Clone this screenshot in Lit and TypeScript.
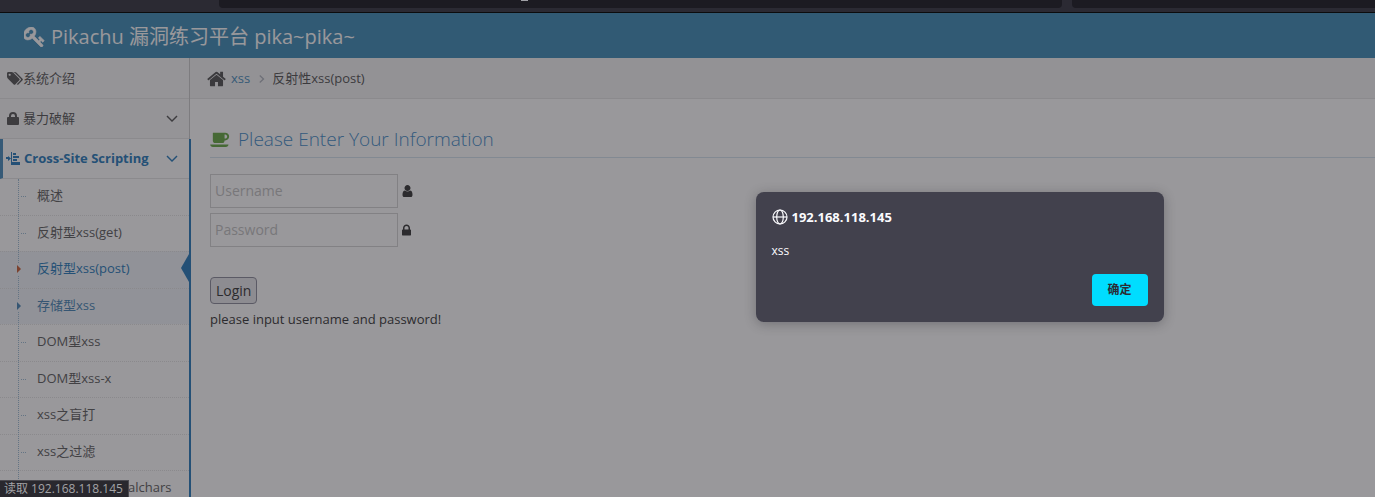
import { LitElement, html, css, svg } from "lit";
import { customElement, state } from "lit/decorators.js";

const glyphs = {
  key: ["100 120 1620 1600", "M832 512q0-80-56-136t-136-56-136 56-56 136q0 42 19 83-41-19-83-19-80 0-136 56t-56 136 56 136 136 56 136-56 56-136q0-42-19-83 41 19 83 19 80 0 136-56t56-136zm851 704q0 17-49 66t-66 49q-9 0-28.5-16t-36.5-33-38.5-40-24.5-26l-96 96 220 220q28 28 28 68 0 42-39 81t-81 39q-40 0-68-28l-671-671q-176 131-365 131-163 0-265.5-102.5t-102.5-265.5q0-160 95-313t248-248 313-95q163 0 265.5 102.5t102.5 265.5q0 189-131 365l355 355 96-96q-3-3-26-24.5t-40-38.5-33-36.5-16-28.5q0-17 49-66t66-49q13 0 23 10 6 6 46 44.5t82 79.5 86.5 86 73 78 28.5 41z"],
  home: ["64 192 1664 1408", "M1472 992v480q0 26-19 45t-45 19h-384v-384h-256v384h-384q-26 0-45-19t-19-45v-480q0-1 .5-3t.5-3l575-474 575 474q1 2 1 6zm223-69l-62 74q-8 9-21 11h-3q-13 0-21-7l-692-577-692 577q-12 8-24 7-13-2-21-11l-62-74q-8-10-7-23.5t11-21.5l719-599q32-26 76-26t76 26l244 204v-195q0-14 9-23t23-9h192q14 0 23 9t9 23v408l219 182q10 8 11 21.5t-7 23.5z"],
  coffee: ["0 320 1920 1472", "M1664 768q0-80-56-136t-136-56h-64v384h64q80 0 136-56t56-136zm-1664 768h1792q0 106-75 181t-181 75h-1280q-106 0-181-75t-75-181zm1856-768q0 159-112.5 271.5t-271.5 112.5h-64v32q0 92-66 158t-158 66h-704q-92 0-158-66t-66-158v-736q0-26 19-45t45-19h1152q159 0 271.5 112.5t112.5 271.5z"],
  tags: ["0 128 1920 1536", "M448 448q0-53-37.5-90.5t-90.5-37.5-90.5 37.5-37.5 90.5 37.5 90.5 90.5 37.5 90.5-37.5 37.5-90.5zm1067 576q0 53-37 90l-491 492q-39 37-91 37-53 0-90-37l-715-716q-38-37-64.5-101t-26.5-117v-416q0-52 38-90t90-38h416q53 0 117 26.5t102 64.5l715 714q37 39 37 91zm384 0q0 53-37 90l-491 492q-39 37-91 37-36 0-59-14t-53-45l470-470q37-37 37-90 0-52-37-91l-715-714q-38-38-102-64.5t-117-26.5h224q53 0 117 26.5t102 64.5l715 714q37 39 37 91z"],
  user: ["256 128 1280 1536", "M1536 1399q0 109-62.5 187t-150.5 78h-854q-88 0-150.5-78t-62.5-187q0-85 8.5-160.5t31.5-152 58.5-131 94-89 134.5-34.5q131 128 313 128t313-128q76 0 134.5 34.5t94 89 58.5 131 31.5 152 8.5 160.5zm-256-887q0 159-112.5 271.5t-271.5 112.5-271.5-112.5-112.5-271.5 112.5-271.5 271.5-112.5 271.5 112.5 112.5 271.5z"],
  lock: ["320 128 1152 1408", "M640 768h512v-192q0-106-75-181t-181-75-181 75-75 181v192zm832 96v576q0 40-28 68t-68 28h-960q-40 0-68-28t-28-68v-576q0-40 28-68t68-28h32v-192q0-184 132-316t316-132 316 132 132 316v192h32q40 0 68 28t28 68z"],
  padlock: ["0 0 12 13", "M2 5V4q0-4 4-4t4 4v1h1q1 0 1 1v6q0 1-1 1H1q-1 0-1-1V6q0-1 1-1zM4 5h4V4q0-2-2-2t-2 2z"],
  indent: ["0 0 14 13", "M5 0h1v13H5zM7 1h3v2H7zM7 4h6v2H7zM7 7h4v2H7zM6 10h8v3H6zM0 5h2V4l3 2.500L2 9V7H0z"],
  down: ["0 0 12 8", "M1.500.500 6 5 10.500.500 11.500 1.500 6 7 .500 1.500z"],
  right: ["0 0 6 8", "M1.200 0 5.500 4 1.200 8 .300 7 3.500 4 .300 1z"],
} as const;

const icon = (name: keyof typeof glyphs, cls: string) => html`
  <svg class="icon ${cls}" viewBox=${glyphs[name][0]} aria-hidden="true">
    ${svg`<path d=${glyphs[name][1]} fill="currentColor"></path>`}
  </svg>`;

const submenu = [
  { text: "概述", cls: "" },
  { text: "反射型xss(get)", cls: "" },
  { text: "反射型xss(post)", cls: "current" },
  { text: "存储型xss", cls: "hover" },
  { text: "DOM型xss", cls: "" },
  { text: "DOM型xss-x", cls: "" },
  { text: "xss之盲打", cls: "" },
  { text: "xss之过滤", cls: "" },
  { text: "xss之htmlspecialchars", cls: "" },
];

@customElement("app-root")
export class AppRoot extends LitElement {
  static styles = css`
    :host {
      display: flex;
      flex-direction: column;
      height: 100vh;
      overflow: hidden;
      font: 13px/1.5 "Open Sans", "Noto Sans CJK SC", sans-serif;
      color: #393939;
    }
    * { box-sizing: border-box; }
    a { color: inherit; text-decoration: none; }
    ul, ol { list-style: none; margin: 0; padding: 0; }
    .icon { display: block; flex: none; }

    .toolbar {
      flex: none;
      display: flex;
      gap: 10px;
      height: 13px;
      padding: 0 0 4px 219px;
      background: #2b2a33;
      border-bottom: 1px solid #0c0c0d;
    }
    .field { height: 8px; background: #1c1b22; border-radius: 0 0 4px 4px; }
    .address { flex: 843 1 0; }
    .search { flex: 303 1 0; border-bottom-right-radius: 0; }
    .caret { width: 7px; height: 1px; margin-left: 302px; background: #a0a0a6; }

    .viewport {
      position: relative;
      flex: 1;
      min-height: 0;
      display: flex;
      flex-direction: column;
      overflow: hidden;
      background: #fff;
    }
    .navbar {
      flex: none;
      height: 45px;
      padding: 2px 0 0 24px;
      display: flex;
      align-items: center;
      background: #438eb9;
      color: #fff;
    }
    .brand { display: flex; align-items: center; gap: 6px; font-size: 20px; line-height: 30px; }
    .key { width: 21px; height: 20px; stroke: currentColor; stroke-width: 50; }

    .body { flex: 1; min-height: 0; display: flex; isolation: isolate; }
    .sidebar {
      position: relative;
      z-index: 1;
      flex: none;
      width: 190px;
      background: #f2f2f2;
      border-right: 1px solid #ccc;
    }
    .top {
      display: flex;
      align-items: center;
      height: 40px;
      padding: 0 11px 0 7px;
      background: #f8f8f8;
      border-bottom: 1px solid #e5e5e5;
      color: #585858;
    }
    .top .label { flex: 1; }
    .first { height: 41px; padding-top: 1px; }
    .tags { width: 16px; height: 13px; }
    .padlock { width: 12px; height: 13px; margin-right: 4px; }
    .indent { width: 14px; height: 13px; margin-right: 4px; }
    .down { width: 12px; height: 8px; }
    .group { margin-right: -2px; border-right: 2px solid #2b7dbc; }
    .open {
      padding: 0 11px 0 3px;
      border-left: 3px solid #4c8fbd;
      background: #fff;
      color: #2b7dbc;
      font-weight: 700;
    }
    .sub { position: relative; background: #fff; }
    .sub::before {
      content: "";
      position: absolute;
      z-index: 1;
      top: 0;
      bottom: 0;
      left: 18px;
      border-left: 1px dotted #9dbdd6;
    }
    .sub a {
      position: relative;
      display: block;
      padding: 7px 0 9px 37px;
      border-top: 1px dotted #e4e4e4;
      color: #616161;
      white-space: nowrap;
    }
    .sub li:first-child a { border-top: 0; }
    .sub a::before {
      content: "";
      position: absolute;
      z-index: 2;
      top: 17px;
      left: 21px;
      width: 5px;
      border-top: 1px dotted #9dbdd6;
    }
    .sub .current, .sub .hover { background: #f1f5f9; color: #4b88b7; }
    .sub .current { color: #2b7dbc; }
    .sub .current::before, .sub .hover::before {
      top: 11px;
      left: 15px;
      width: 7px;
      height: 12px;
      border: 0;
      background: #f1f5f9;
    }
    .marker {
      position: absolute;
      z-index: 3;
      top: 13px;
      left: 17px;
      border: solid transparent;
      border-width: 4px 0 4px 4px;
      border-left-color: #4b88b7;
    }
    .current .marker { border-left-color: #c86139; }
    .current::after {
      content: "";
      position: absolute;
      top: 2px;
      right: 0;
      border: solid transparent;
      border-width: 14px 8px 14px 0;
      border-right-color: #2b7dbc;
    }

    .main { flex: 1; min-width: 0; }
    .crumbs {
      display: flex;
      align-items: center;
      height: 41px;
      padding: 1px 0 0 17px;
      background: #f5f5f5;
      border-bottom: 1px solid #e5e5e5;
      color: #555;
    }
    .crumbs ol { display: flex; align-items: center; }
    .crumbs li { display: flex; align-items: center; }
    .crumbs a { color: #4c8fbd; }
    .home { width: 19px; height: 16px; margin-right: 5px; }
    .right { width: 6px; height: 8px; margin: 0 7px 0 9px; color: #b2b6bf; }

    .page { padding: 24px 0 0 20px; }
    h4 {
      display: flex;
      align-items: center;
      gap: 8px;
      height: 35px;
      margin: 0 0 16px;
      padding-bottom: 2px;
      border-bottom: 1px solid #d5e3ef;
      color: #478fca;
      font-size: 19px;
      font-weight: 300;
    }
    .coffee { width: 20px; height: 15px; color: #69aa46; }
    .row { display: flex; align-items: center; gap: 4px; margin-bottom: 5px; color: #393939; }
    input {
      width: 188px;
      height: 34px;
      margin: 0;
      padding: 5px 4px 6px;
      border: 1px solid #d5d5d5;
      border-radius: 0;
      background: #fff;
      font: 14px/20px "Open Sans", sans-serif;
      color: #858585;
      outline: none;
    }
    input::placeholder { color: #c4c4c4; opacity: 1; }
    .user { width: 11px; height: 12px; }
    .lock { width: 9px; height: 12px; }
    .login {
      display: block;
      margin: 30px 0 6px;
      height: 27px;
      padding: 0 5px;
      border: 1px solid #8f8f9d;
      border-radius: 4px;
      background: #e9e9ed;
      font: 14px/20px "Open Sans", sans-serif;
      color: #393939;
    }
    p { margin: 0; }

    .shade { position: absolute; inset: 0; background: rgba(28, 27, 34, 0.45); }
    .status {
      position: absolute;
      left: 0;
      bottom: 0;
      padding: 0 5px 0 4px;
      border: solid #4a494f;
      border-width: 1px 1px 0 0;
      background: #29282e;
      color: #a3a3a6;
      font-size: 12px;
      line-height: 16px;
    }
    .dialog {
      position: absolute;
      top: 179px;
      left: calc(50% + 68px);
      width: 408px;
      height: 130px;
      margin: 0;
      padding: 16px;
      display: flex;
      flex-direction: column;
      border: 0;
      border-radius: 8px;
      background: #42414d;
      color: #fbfbfe;
      box-shadow: 0 2px 12px rgba(28, 27, 34, 0.3);
      font-size: 12px;
      line-height: 18px;
    }
    .origin { display: flex; align-items: center; gap: 4px; font-size: 13px; font-weight: 700; }
    .globe { width: 16px; height: 16px; }
    .message { margin-top: 16px; font-size: 12px; }
    .ok {
      align-self: flex-end;
      margin-top: auto;
      width: 56px;
      height: 32px;
      padding: 0;
      border: 0;
      border-radius: 4px;
      background: #00ddff;
      color: #2b2a33;
      font: 700 12px/18px "Open Sans", "Noto Sans CJK SC", sans-serif;
    }
  `;

  @state() private alertOpen = true;

  private renderSidebar() {
    return html`
      <nav class="sidebar">
        <a class="top first" href="#">${icon("tags", "tags")}<span class="label">系统介绍</span></a>
        <a class="top" href="#">
          ${icon("padlock", "padlock")}<span class="label">暴力破解</span>${icon("down", "down")}
        </a>
        <div class="group">
          <a class="top open" href="#">
            ${icon("indent", "indent")}<span class="label">Cross-Site Scripting</span>${icon("down", "down")}
          </a>
          <ul class="sub">
            ${submenu.map((item) => html`
              <li>
                <a class=${item.cls} href="#">${item.cls ? html`<i class="marker"></i>` : ""}${item.text}</a>
              </li>`)}
          </ul>
        </div>
      </nav>`;
  }

  private renderMain() {
    return html`
      <main class="main">
        <nav class="crumbs">
          <ol>
            <li>${icon("home", "home")}<a href="#">xss</a></li>
            <li>${icon("right", "right")}反射性xss(post)</li>
          </ol>
        </nav>
        <section class="page">
          <h4>${icon("coffee", "coffee")}Please Enter Your Information</h4>
          <form @submit=${(e: Event) => e.preventDefault()}>
            <label class="row">
              <input type="text" placeholder="Username" aria-label="Username" />${icon("user", "user")}
            </label>
            <label class="row">
              <input type="password" placeholder="Password" aria-label="Password" />${icon("lock", "lock")}
            </label>
            <button class="login" type="submit">Login</button>
          </form>
          <p>please input username and password!</p>
        </section>
      </main>`;
  }

  private renderAlert() {
    return html`
      <div class="shade"></div>
      <div class="dialog" role="alertdialog" aria-labelledby="origin" aria-describedby="message">
        <div class="origin" id="origin">
          <svg class="icon globe" viewBox="0 0 16 16" fill="none" stroke="currentColor" stroke-width="1.2" aria-hidden="true">
            <circle cx="8" cy="8" r="7"></circle>
            <ellipse cx="8" cy="8" rx="3.300" ry="7"></ellipse>
            <path d="M1 8h14"></path>
          </svg>
          192.168.118.145
        </div>
        <div class="message" id="message">xss</div>
        <button class="ok" type="button" @click=${() => (this.alertOpen = false)}>确定</button>
      </div>`;
  }

  render() {
    return html`
      <div class="toolbar">
        <div class="field address"><div class="caret"></div></div>
        <div class="field search"></div>
      </div>
      <div class="viewport">
        <header class="navbar">
          <a class="brand" href="#">${icon("key", "key")}Pikachu 漏洞练习平台 pika~pika~</a>
        </header>
        <div class="body">${this.renderSidebar()}${this.renderMain()}</div>
        ${this.alertOpen ? this.renderAlert() : ""}
        <div class="status">读取 192.168.118.145</div>
      </div>`;
  }
}
